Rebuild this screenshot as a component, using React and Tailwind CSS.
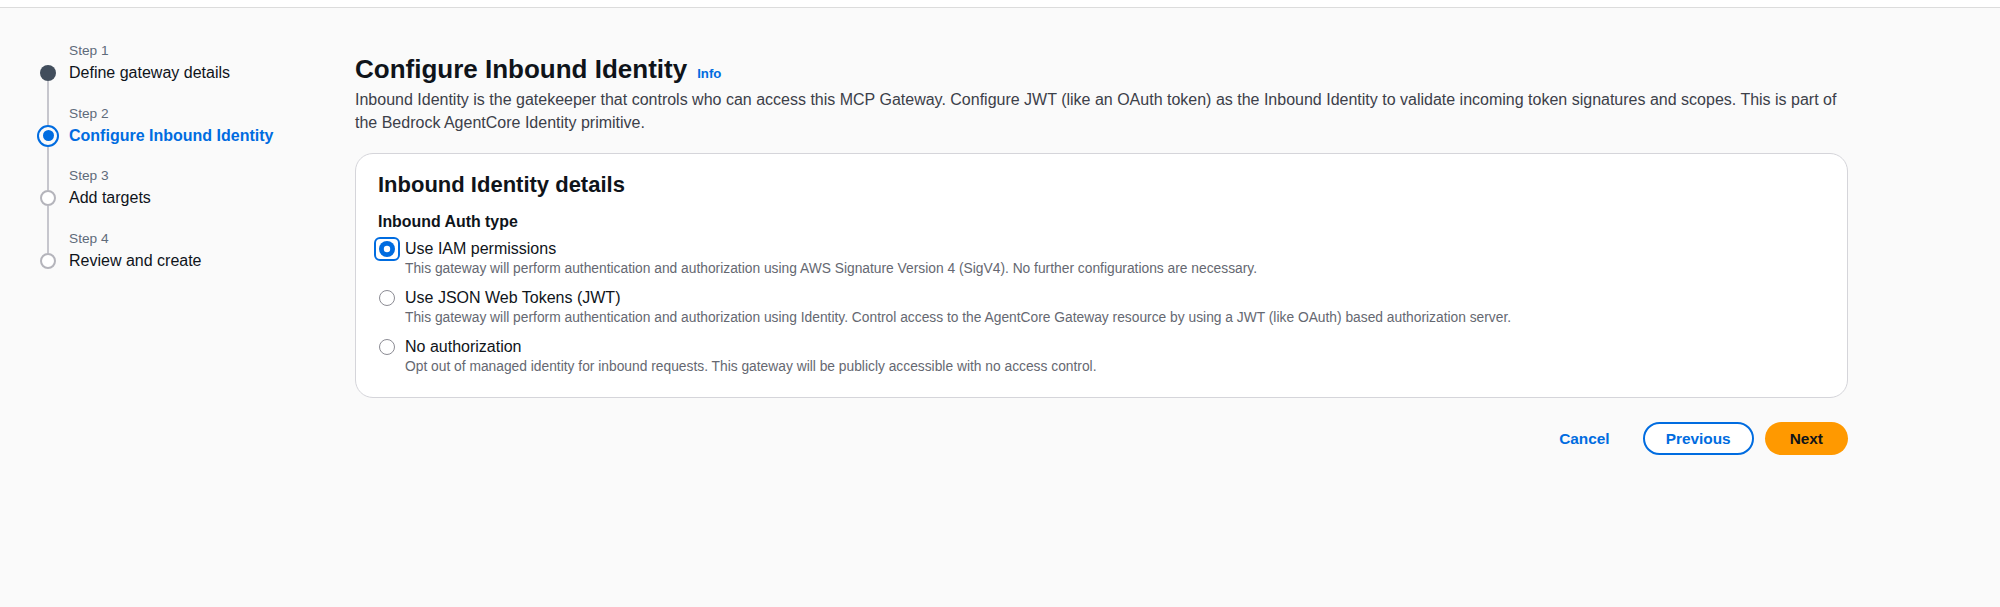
import React, { useState } from 'react';

const steps = [
  { label: 'Step 1', title: 'Define gateway details', state: 'done' },
  { label: 'Step 2', title: 'Configure Inbound Identity', state: 'active' },
  { label: 'Step 3', title: 'Add targets', state: 'todo' },
  { label: 'Step 4', title: 'Review and create', state: 'todo' },
];

const authOptions = [
  {
    id: 'iam',
    label: 'Use IAM permissions',
    description:
      'This gateway will perform authentication and authorization using AWS Signature Version 4 (SigV4). No further configurations are necessary.',
  },
  {
    id: 'jwt',
    label: 'Use JSON Web Tokens (JWT)',
    description:
      'This gateway will perform authentication and authorization using Identity. Control access to the AgentCore Gateway resource by using a JWT (like OAuth) based authorization server.',
  },
  {
    id: 'none',
    label: 'No authorization',
    description:
      'Opt out of managed identity for inbound requests. This gateway will be publicly accessible with no access control.',
  },
];

// Marker for a step in the wizard navigation
const StepMarker = ({ state }) => {
  if (state === 'done') {
    return <span className="block h-[16px] w-[16px] rounded-full bg-[#414d5c]" />;
  }
  if (state === 'active') {
    return (
      <span className="flex h-[22px] w-[22px] items-center justify-center rounded-full border-[2.5px] border-[#006ce0]">
        <span className="block h-[11px] w-[11px] rounded-full bg-[#006ce0]" />
      </span>
    );
  }
  return <span className="block h-[16px] w-[16px] rounded-full border-2 border-[#b4b4bb] bg-white" />;
};

const StepNav = () => (
  <nav className="w-[355px] shrink-0 pl-[37px] pt-[33px]">
    {steps.map((step, i) => {
      const first = i === 0;
      const last = i === steps.length - 1;
      return (
        <div key={step.label} className="flex flex-col">
          <div className="flex h-[21px]">
            <div className="flex w-[22px] justify-center">
              {!first && <span className="block h-full w-[2px] bg-[#c6c6cd]" />}
            </div>
            <span className="ml-[10px] text-[13.7px] leading-[20px] text-[#5f6b7a]">{step.label}</span>
          </div>
          <div className="flex h-[22px]">
            <div className="flex w-[22px] flex-col items-center">
              <span className={`w-[2px] flex-1 ${first ? '' : 'bg-[#c6c6cd]'}`} />
              <StepMarker state={step.state} />
              <span className={`w-[2px] flex-1 ${last ? '' : 'bg-[#c6c6cd]'}`} />
            </div>
            <span
              className={`ml-[10px] text-[16px] leading-[22px] ${
                step.state === 'active' ? 'font-bold text-[#006ce0]' : 'text-[#0f141a]'
              }`}
            >
              {step.title}
            </span>
          </div>
          {!last && (
            <div className="flex h-[19.5px]">
              <div className="flex w-[22px] justify-center">
                <span className="block h-full w-[2px] bg-[#c6c6cd]" />
              </div>
            </div>
          )}
        </div>
      );
    })}
  </nav>
);

const Radio = ({ checked }) => (
  <span className="relative mt-[3px] flex h-[16px] w-[16px] shrink-0">
    {checked ? (
      <>
        <svg width="16" height="16" viewBox="0 0 16 16">
          <circle cx="8" cy="8" r="8" fill="#006ce0" />
          <circle cx="8" cy="8" r="3.2" fill="#ffffff" />
        </svg>
        <span className="absolute -left-[5px] -top-[4px] h-[24px] w-[26px] rounded-[6px] border-2 border-[#006ce0]" />
      </>
    ) : (
      <span className="block h-[16px] w-[16px] rounded-full border-[1.5px] border-[#8c8c94] bg-white" />
    )}
  </span>
);

export default function App() {
  const [authType, setAuthType] = useState('iam');

  return (
    <div className="min-h-[607px] bg-[#fafafa] font-['Liberation_Sans',Arial,sans-serif] text-[#0f141a]">
      <div className="h-[8px] border-b border-[#dcdcdc] bg-white" />
      <div className="flex">
        <StepNav />

        <main className="flex-1 pr-[152px] pt-[44px]">
          <div className="flex items-baseline">
            <h1 className="text-[26px] font-bold leading-[34px] text-[#0f141a]">Configure Inbound Identity</h1>
            <a href="#" className="ml-[10px] text-[13.2px] font-bold text-[#006ce0]">Info</a>
          </div>
          <p className="mt-[2px] text-[16px] leading-[23px] text-[#3c4049]">
            Inbound Identity is the gatekeeper that controls who can access this MCP Gateway. Configure JWT (like an
            OAuth token) as the Inbound Identity to validate incoming token signatures and scopes. This is part of the
            Bedrock AgentCore Identity primitive.
          </p>

          <section className="mt-[19px] rounded-[18px] border border-[#d5d5da] bg-white px-[22px] pb-[21px] pt-[17px]">
            <h2 className="text-[22px] font-bold leading-[28px] text-[#0f141a]">Inbound Identity details</h2>
            <div className="mt-[12px] text-[15.9px] font-bold leading-[22px]">Inbound Auth type</div>
            <div className="mt-[5px] flex flex-col gap-[9px]">
              {authOptions.map(opt => (
                <label
                  key={opt.id}
                  className="flex cursor-pointer gap-[10px] pl-[1px]"
                  onClick={() => setAuthType(opt.id)}
                >
                  <Radio checked={authType === opt.id} />
                  <span className="flex flex-col">
                    <span className="text-[16px] leading-[22px] text-[#0f141a]">{opt.label}</span>
                    <span className="text-[13.8px] leading-[18px] text-[#656871]">{opt.description}</span>
                  </span>
                </label>
              ))}
            </div>
          </section>

          <div className="mt-[24px] flex items-center justify-end gap-[11px]">
            <button className="h-[33px] px-[22px] text-[15.4px] font-bold text-[#006ce0]">Cancel</button>
            <button className="h-[33px] rounded-full border-2 border-[#006ce0] bg-white px-[21px] text-[15.4px] font-bold text-[#006ce0]">
              Previous
            </button>
            <button className="h-[33px] rounded-full bg-[#ff9900] px-[25px] text-[15.4px] font-bold text-[#0f141a]">
              Next
            </button>
          </div>
        </main>
      </div>
    </div>
  );
}
